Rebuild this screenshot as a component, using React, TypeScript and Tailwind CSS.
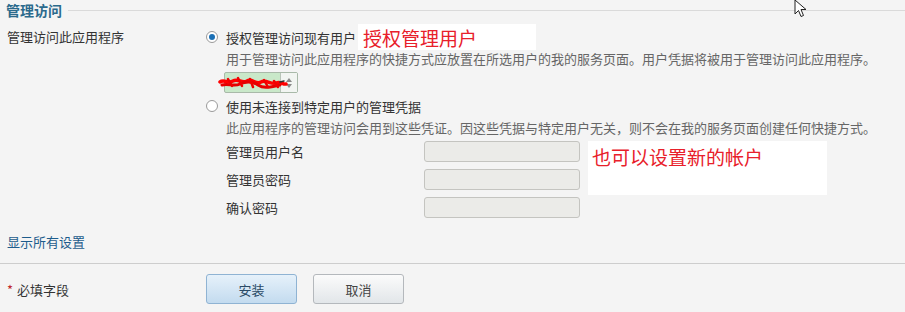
import React from 'react'

const font = { fontFamily: '"Noto Sans CJK SC", "Noto Sans", sans-serif' }

function Radio({ checked }: { checked?: boolean }) {
  return (
    <span className="w-[12px] h-[12px] rounded-full border border-[#9a9a9a] bg-white flex items-center justify-center shrink-0">
      {checked && <span className="w-[6px] h-[6px] rounded-full bg-[#1b6fb5]" />}
    </span>
  )
}

function Field({ label }: { label: string }) {
  return (
    <div className="flex items-center h-[21px]">
      <span className="w-[198px] text-[13px] text-[#333]">{label}</span>
      <div className="w-[156px] h-[21px] rounded-[3px] border border-[#c4c4c0] bg-[#ebebe8]" />
    </div>
  )
}

export default function App() {
  return (
    <div className="w-[905px] h-[312px] bg-[#f4f4f4] relative overflow-hidden leading-none" style={font}>
      {/* section header */}
      <div className="flex items-center h-[19px] pl-[6px]">
        <span className="text-[14px] font-bold text-[#2b6a8c]">管理访问</span>
        <div className="flex-1 h-px bg-[#dadada] ml-[6px] mt-[1px]" />
      </div>

      <div className="flex mt-[5px]">
        <div className="w-[206px] pl-[7px] pt-[6px] text-[13px] text-[#333]">管理访问此应用程序</div>

        <div className="flex flex-col">
          {/* option 1 */}
          <div className="flex items-center h-[26px]">
            <Radio checked />
            <span className="ml-[8px] text-[13px] text-[#333]">授权管理访问现有用户</span>
            <div className="ml-[2px] w-[178px] h-[26px] bg-white flex items-center pl-[5px]">
              <span className="text-[19px] text-[#e8202a]">授权管理用户</span>
            </div>
          </div>
          <div className="pl-[20px] mt-[2px] text-[13px] text-[#666]">
            用于管理访问此应用程序的快捷方式应放置在所选用户的我的服务页面。用户凭据将被用于管理访问此应用程序。
          </div>
          <div className="relative ml-[18px] mt-[7px] w-[74px] h-[21px] border border-[#a9b9a9] rounded-[2px] bg-[#c9e8c9] flex">
            <div className="flex-1" />
            <div className="w-[17px] border-l border-[#b8c4b8] bg-[#f2f5f2] flex flex-col items-center justify-center gap-[2px]">
              <svg width="6" height="4" viewBox="0 0 6 4"><path d="M0 4 L3 0 L6 4 Z" fill="#888" /></svg>
              <svg width="6" height="4" viewBox="0 0 6 4"><path d="M0 0 L3 4 L6 0 Z" fill="#888" /></svg>
            </div>
            <svg className="absolute left-[-7px] top-[3px]" width="70" height="14" viewBox="0 0 70 14">
              <path d="M2 6 C6 3 10 8 15 5 S24 8 29 5 S38 9 43 6 S53 9 58 7 S65 9 68 8" stroke="#ff0000" strokeWidth="3.5" fill="none" strokeLinecap="round" />
              <path d="M4 9 C10 7 16 11 22 8 S34 5 40 9 S52 11 62 9" stroke="#e60000" strokeWidth="3" fill="none" strokeLinecap="round" />
              <path d="M10 3 L14 10 M20 2 L24 10 M32 3 L35 11 M46 4 L50 11 M56 5 L60 11" stroke="#f00000" strokeWidth="2.5" strokeLinecap="round" />
              <path d="M62 6 L66 5" stroke="#333" strokeWidth="1.5" strokeLinecap="round" />
            </svg>
          </div>

          {/* option 2 */}
          <div className="flex items-center h-[16px] mt-[5px]">
            <Radio />
            <span className="ml-[8px] text-[13px] text-[#333]">使用未连接到特定用户的管理凭据</span>
          </div>
          <div className="pl-[20px] mt-[7px] text-[13px] text-[#666]">
            此应用程序的管理访问会用到这些凭证。因这些凭据与特定用户无关，则不会在我的服务页面创建任何快捷方式。
          </div>
          <div className="flex mt-[7px] pl-[20px]">
            <div className="flex flex-col gap-[7px]">
              <Field label="管理员用户名" />
              <Field label="管理员密码" />
              <Field label="确认密码" />
            </div>
            <div className="ml-[8px] w-[239px] h-[54px] bg-white pl-[4px] pt-[6px]">
              <span className="text-[19px] text-[#e8202a]">也可以设置新的帐户</span>
            </div>
          </div>
        </div>
      </div>

      <div className="pl-[7px] mt-[17px] text-[13px] text-[#1d5c8c]">显示所有设置</div>

      <div className="h-px bg-[#cdcdcd] mt-[15px]" />

      {/* footer */}
      <div className="flex items-center mt-[10px]">
        <div className="w-[206px] pl-[7px] text-[13px] text-[#333]">
          <span className="text-[#c0282d] mr-[4px]">*</span>必填字段
        </div>
        <button className="w-[91px] h-[30px] rounded-[3px] border border-[#8fb3d3] bg-gradient-to-b from-[#e6f1fa] to-[#c3dbef] text-[13px] text-[#2a4a66]">
          安装
        </button>
        <button className="ml-[16px] w-[91px] h-[30px] rounded-[3px] border border-[#b4b8bc] bg-gradient-to-b from-[#fbfbfb] to-[#e2e6e9] text-[13px] text-[#444]">
          取消
        </button>
      </div>

      {/* mouse cursor */}
      <svg className="absolute left-[794px] top-[-1px]" width="14" height="20" viewBox="0 0 14 20">
        <path d="M1 1 L1 15 L4.5 11.5 L7 17.5 L9.5 16.5 L7 10.5 L12 10.5 Z" fill="#fff" stroke="#222" strokeWidth="1" strokeLinejoin="round" />
      </svg>
    </div>
  )
}
